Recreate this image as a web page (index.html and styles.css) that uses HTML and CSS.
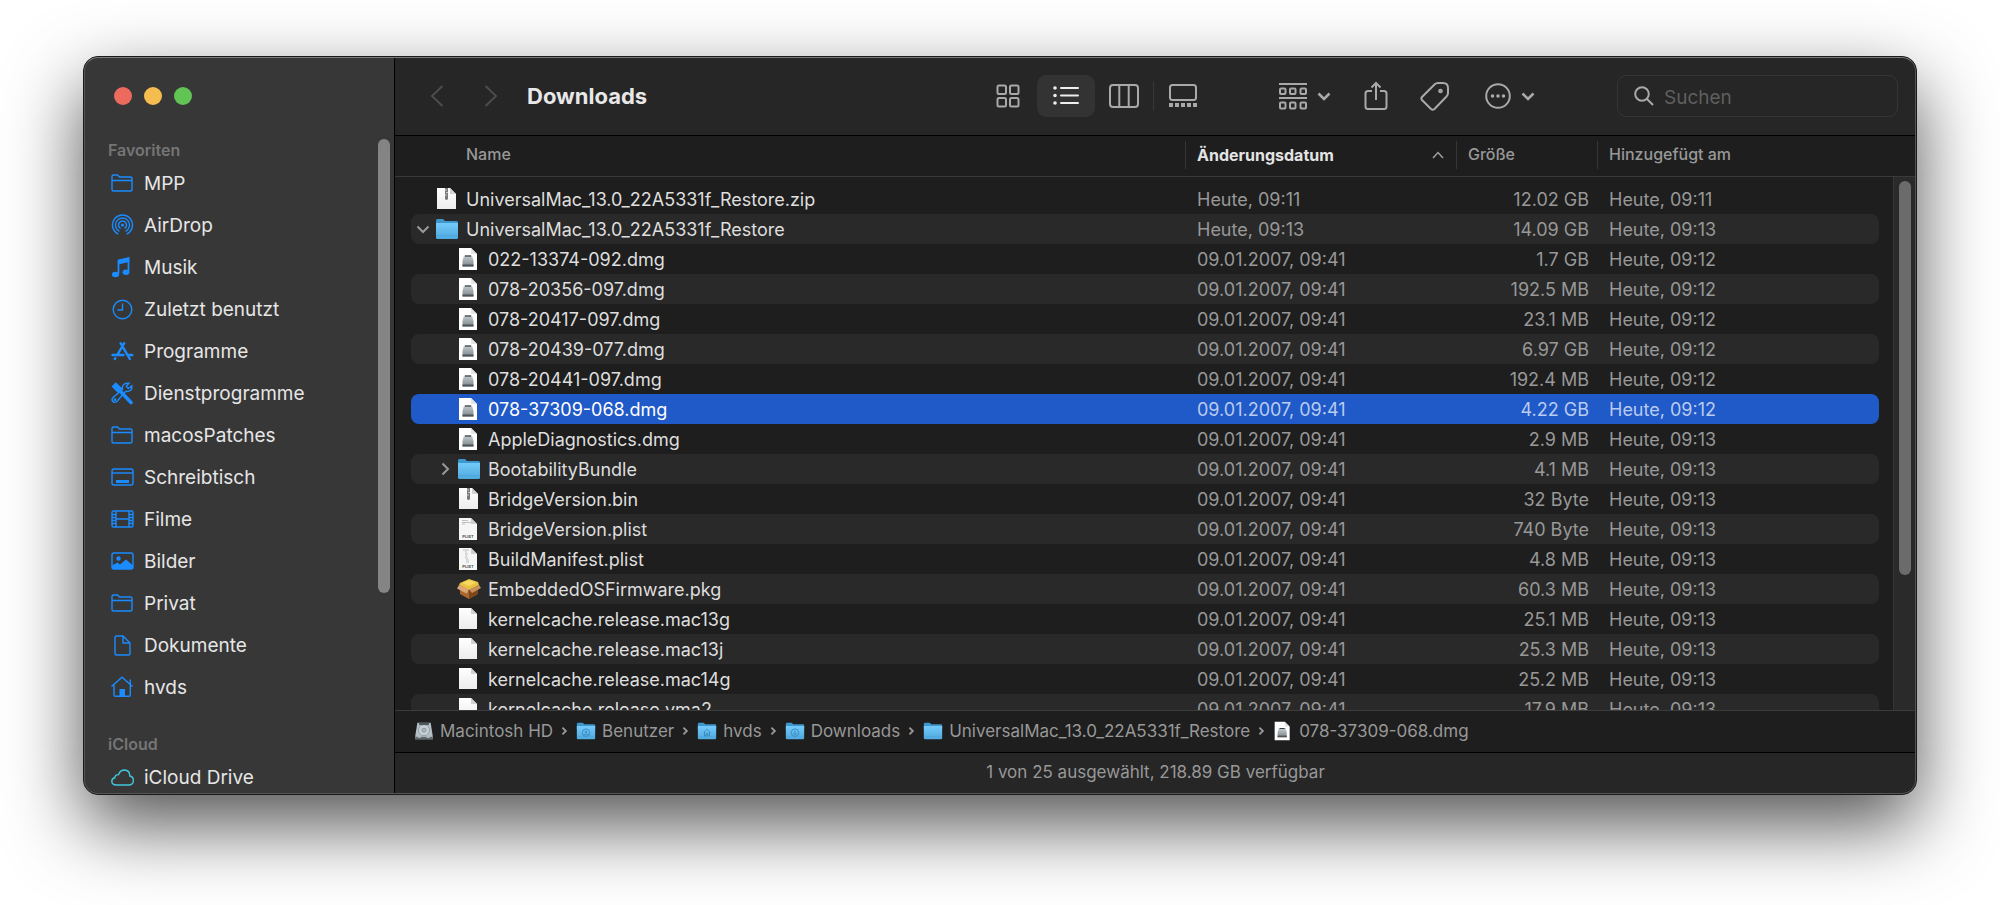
FILE: index.html
```html
<!DOCTYPE html>
<html lang="de">
<head>
    <meta charset="UTF-8">
    <title>Downloads</title>
    <link rel="stylesheet" href="styles.css">
</head>
<body>
<svg class="defs" aria-hidden="true">
    <defs>
        <linearGradient id="blue" x1="0" y1="0" x2="0" y2="1">
            <stop offset="0" stop-color="#74cafa"/>
            <stop offset="1" stop-color="#4ea9de"/>
        </linearGradient>
        <linearGradient id="paper" x1="0" y1="0" x2="0" y2="1">
            <stop offset="0" stop-color="#ffffff"/>
            <stop offset="1" stop-color="#ececec"/>
        </linearGradient>
        <linearGradient id="metal" x1="0" y1="0" x2="0" y2="1">
            <stop offset="0" stop-color="#c4ccd0"/>
            <stop offset="1" stop-color="#7d868a"/>
        </linearGradient>
    </defs>
    <!-- sidebar -->
    <symbol id="s-folder" viewBox="0 0 24 24">
        <path d="M2 18V5.500Q2 4 3.500 4H7.500L9.500 6H20.500Q22 6 22 7.500V18.500Q22 20 20.500 20H3.500Q2 20 2 18.500ZM2 9.500H22"/>
    </symbol>
    <symbol id="s-airdrop" viewBox="0 0 24 24">
        <circle cx="12.500" cy="12" r="1.600" fill="currentColor" stroke="none"/>
        <path d="M10.600 15.500A4 4 0 1 1 14.400 15.500M9.400 18.300A7 7 0 1 1 15.600 18.300M8.200 21A10 10 0 1 1 16.800 21"/>
    </symbol>
    <symbol id="s-music" viewBox="0 0 24 24">
        <path d="M8.500 18.500V5.500L18.500 3.200V16.500" stroke-width="1.800"/>
        <path d="M8 5L19.300 2.500V7L8 9.500Z" fill="currentColor" stroke="none"/>
        <ellipse cx="5.500" cy="19.500" rx="3.600" ry="2.800" fill="currentColor" stroke="none"/>
        <ellipse cx="16" cy="17.300" rx="3.400" ry="2.700" fill="currentColor" stroke="none"/>
    </symbol>
    <symbol id="s-clock" viewBox="0 0 24 24">
        <circle cx="12.500" cy="12.500" r="9.300"/>
        <path d="M12.500 6.500V13H7.500"/>
    </symbol>
    <symbol id="s-apps" viewBox="0 0 24 24">
        <path d="M14.200 4.200L7.300 16M10.600 4.200L19.800 20M5.300 19.200L4.800 20M2.500 16H13.500M17.500 16H22.200" stroke-width="2.400" stroke-linecap="round"/>
    </symbol>
    <symbol id="s-tools" viewBox="0 0 24 24">
        <path d="M2.500 5.500L5.800 2.200L12 8L8.500 11.500Z" fill="currentColor"/>
        <path d="M11 11L21 21.500" stroke-width="3.600" stroke-linecap="round"/>
        <path d="M15.500 10.500L6.800 20.500A2.800 2.800 0 0 1 2.500 17L12.500 8.500Q11.500 3 17 2.300L19 2.300L16.300 5.300L18.300 7.600L21.800 4.800Q22.800 11 15.500 10.500Z"/>
        <circle cx="5" cy="18.700" r=".7"/>
    </symbol>
    <symbol id="s-desktop" viewBox="0 0 24 24">
        <rect x="2" y="4" width="21" height="16" rx="2"/>
        <path d="M2 8H23"/>
        <path d="M6 16.500H19" stroke-width="3"/>
    </symbol>
    <symbol id="s-film" viewBox="0 0 24 24">
        <rect x="2" y="4" width="21" height="16" rx="1.500"/>
        <path d="M6 4V20M19 4V20M6 12H19M2 7.500H6M2 10.500H6M2 13.500H6M2 16.500H6M19 7.500H23M19 10.500H23M19 13.500H23M19 16.500H23"/>
    </symbol>
    <symbol id="s-image" viewBox="0 0 24 24">
        <rect x="2" y="4" width="21" height="16" rx="2"/>
        <circle cx="8.500" cy="9.500" r="2.200" fill="currentColor" stroke="none"/>
        <path d="M2 16.500L7.500 13.500L10 15.500L16 10.500L23 16.500V18.500Q23 20 21 20H4Q2 20 2 18.500Z" fill="currentColor" stroke="none"/>
    </symbol>
    <symbol id="s-doc" viewBox="0 0 24 24">
        <path d="M5 4.500Q5 3 6.500 3H13L20 10V20.500Q20 22 18.500 22H6.500Q5 22 5 20.500ZM13 3V10H20"/>
    </symbol>
    <symbol id="s-home" viewBox="0 0 24 24">
        <path d="M1.500 11.500L12 2.300L22.500 11.500M4 9.500V20Q4 21.300 5.300 21.300H19Q20.300 21.300 20.300 20V4.500"/>
        <path d="M9.500 21V14H15V21Z" fill="currentColor" stroke="none"/>
    </symbol>
    <symbol id="s-cloud" viewBox="0 0 24 24">
        <path d="M6.500 20Q1.800 20 1.800 16.300Q1.800 13.400 4.800 12.800Q5 9.500 8.600 9.600Q10.200 5 14.500 5Q19.800 5.300 19.800 11Q23.400 11.800 23.400 15.500Q23.200 20 18.800 20Z"/>
    </symbol>
    <!-- files -->
    <symbol id="f-zip" viewBox="0 0 24 24">
        <path d="M2 1H15L21 7V22H2Z" fill="url(#paper)"/>
        <path d="M15 1L21 7H15Z" fill="#d2d2d2"/>
        <path d="M10 1H13V12Q11.500 14 10 12Z" fill="#77797b"/>
        <path d="M10 3H12M11 5.500H13M10 8H12" stroke="#c8c8c8"/>
    </symbol>
    <symbol id="f-doc" viewBox="0 0 24 24">
        <path d="M2 1H14L20 7V22H2Z" fill="url(#paper)"/>
        <path d="M14 1L20 7H14Z" fill="#d2d2d2"/>
    </symbol>
    <symbol id="f-dmg" viewBox="0 0 24 24">
        <path d="M2 1H14L20 7V23H2Z" fill="#ffffff"/>
        <path d="M14 1L20 7H14Z" fill="#e4e4e4"/>
        <path d="M7 8.500H15L16.500 14V19.500H5.500V14Z" fill="url(#metal)"/>
        <path d="M8 9H14" stroke="#353b3d" stroke-width="1.200"/>
        <path d="M5.500 18.500H16.500" stroke="#4d5558" stroke-width="2"/>
    </symbol>
    <symbol id="f-plist" viewBox="0 0 24 24">
        <path d="M2 1H14L20 7V23H2Z" fill="#f6f6f6"/>
        <path d="M14 1L20 7H14Z" fill="#cfcfcf"/>
        <path d="M5 3.500H11M5 5.500H14M5 7H8" stroke="#c0c0c0"/>
        <text x="11" y="20.500" text-anchor="middle" class="tag-text">PLIST</text>
    </symbol>
    <symbol id="f-plist2" viewBox="0 0 24 24">
        <path d="M2 1H14L20 7V23H2Z" fill="#f6f6f6"/>
        <path d="M14 1L20 7H14Z" fill="#cfcfcf"/>
        <path d="M6 3H12M8 5H10M8 7H11M8 9H10M8 11H11M9 13H12M9 15H12" stroke="#bdbdbd"/>
        <text x="11" y="20.500" text-anchor="middle" class="tag-text">PLIST</text>
    </symbol>
    <symbol id="f-folder" viewBox="0 0 24 24">
        <path d="M1 3.500Q1 2 2.500 2H8L10 4H21.500Q23 4 23 5.500V10H1Z" fill="#3d97cc"/>
        <path d="M1 6H23V20.500Q23 22 21.500 22H2.500Q1 22 1 20.500Z" fill="url(#blue)"/>
        <path d="M1 18.500H23" stroke="#4499cc" stroke-opacity=".4"/>
    </symbol>
    <symbol id="f-pkg" viewBox="0 0 24 24">
        <path d="M3 10L12 14L21 10V17L12 22L3 17Z" fill="#a8682f"/>
        <path d="M12 13L21 9V17L12 22Z" fill="#7d4519"/>
        <path d="M3 6L12 2L21 5L22 8L12 13L2 8Z" fill="#e9c23f"/>
        <path d="M5 6L12 3L19 5.500L12 9Z" fill="#f5d960"/>
        <path d="M2 8L12 12.500L9.500 16.500L0 11.500Z" fill="#dda676"/>
        <path d="M22 8L12 12.500L15 16L24 11Z" fill="#c98e5c"/>
    </symbol>
    <symbol id="f-disk" viewBox="0 0 24 24">
        <path d="M4 2H20L22.500 18V22H1.500V18Z" fill="#b3bfc6"/>
        <circle cx="12" cy="11" r="6.500" fill="#c8d2d8" stroke="#8b979e"/>
        <circle cx="12" cy="11" r="2.500" fill="#aeb9bf" stroke="#7f8b92"/>
        <path d="M6 3.500H18" stroke="#4d565b" stroke-width="2.500"/>
        <path d="M1.500 20.500H22.500" stroke="#5d676c" stroke-width="3"/>
        <path d="M5 19.500H8M15 19.500H19" stroke="#dce2e5"/>
    </symbol>
    <symbol id="chev-down" viewBox="0 0 16 16"><path d="M2.500 5.500L8 11L13.500 5.500"/></symbol>
    <symbol id="chev-right" viewBox="0 0 16 16"><path d="M5.500 2.500L11 8L5.500 13.500"/></symbol>
</svg>

<main class="window">
    <aside class="sidebar">
        <div class="lights">
            <button class="light red" aria-label="Schließen"></button>
            <button class="light yellow" aria-label="Minimieren"></button>
            <button class="light green" aria-label="Vergrößern"></button>
        </div>
        <nav class="places">
            <h2>Favoriten</h2>
            <ul>
                <li><a href="#"><svg><use href="#s-folder"/></svg>MPP</a></li>
                <li><a href="#"><svg><use href="#s-airdrop"/></svg>AirDrop</a></li>
                <li><a href="#"><svg><use href="#s-music"/></svg>Musik</a></li>
                <li><a href="#"><svg><use href="#s-clock"/></svg>Zuletzt benutzt</a></li>
                <li><a href="#"><svg><use href="#s-apps"/></svg>Programme</a></li>
                <li><a href="#"><svg><use href="#s-tools"/></svg>Dienstprogramme</a></li>
                <li><a href="#"><svg><use href="#s-folder"/></svg>macosPatches</a></li>
                <li><a href="#"><svg><use href="#s-desktop"/></svg>Schreibtisch</a></li>
                <li><a href="#"><svg><use href="#s-film"/></svg>Filme</a></li>
                <li><a href="#"><svg><use href="#s-image"/></svg>Bilder</a></li>
                <li><a href="#"><svg><use href="#s-folder"/></svg>Privat</a></li>
                <li><a href="#"><svg><use href="#s-doc"/></svg>Dokumente</a></li>
                <li><a href="#"><svg><use href="#s-home"/></svg>hvds</a></li>
            </ul>
            <h2>iCloud</h2>
            <ul>
                <li><a href="#" class="cloud"><svg><use href="#s-cloud"/></svg>iCloud Drive</a></li>
            </ul>
        </nav>
        <div class="side-thumb"></div>
    </aside>

    <section class="content">
        <header class="toolbar">
            <div class="history">
                <button aria-label="Zurück"><svg width="14" height="24" viewBox="0 0 14 24"><path d="M12.500 2L2 12L12.500 22"/></svg></button>
                <button aria-label="Vorwärts"><svg width="14" height="24" viewBox="0 0 14 24"><path d="M1.500 2L12 12L1.500 22"/></svg></button>
            </div>
            <h1>Downloads</h1>
            <div class="views">
                <button aria-label="Symbole">
                    <svg width="24" height="24" viewBox="0 0 24 24"><rect x="1.500" y="1.500" width="8.500" height="8.500" rx="1.500"/><rect x="14" y="1.500" width="8.500" height="8.500" rx="1.500"/><rect x="1.500" y="14" width="8.500" height="8.500" rx="1.500"/><rect x="14" y="14" width="8.500" height="8.500" rx="1.500"/></svg>
                </button>
                <button class="on" aria-label="Liste">
                    <svg width="26" height="24" viewBox="0 0 26 24"><path d="M8 4H25M8 11.500H25M8 19H25" stroke-linecap="round"/><path d="M2 4H2.010M2 11.500H2.010M2 19H2.010" stroke-width="3.600" stroke-linecap="round"/></svg>
                </button>
                <button aria-label="Spalten">
                    <svg width="30" height="24" viewBox="0 0 30 24"><rect x="1" y="1" width="28" height="22" rx="3"/><path d="M10.300 1V23M19.700 1V23"/></svg>
                </button>
                <span class="sep"></span>
                <button aria-label="Galerie">
                    <svg width="30" height="24" viewBox="0 0 30 24"><rect x="2" y="1" width="26" height="15" rx="2.500"/><path d="M1 21H29" stroke-width="4" stroke-dasharray="4 2"/></svg>
                </button>
            </div>
            <div class="actions">
                <button class="group" aria-label="Gruppieren">
                    <svg width="28" height="28" viewBox="0 0 28 28"><path d="M0 2H28M0 16H28"/><rect x="1" y="6.500" width="5.500" height="5.500" rx="1"/><rect x="11" y="6.500" width="5.500" height="5.500" rx="1"/><rect x="21.500" y="6.500" width="5.500" height="5.500" rx="1"/><rect x="1" y="20.500" width="5.500" height="6" rx="1"/><rect x="11" y="20.500" width="5.500" height="6" rx="1"/><rect x="21.500" y="20.500" width="5.500" height="6" rx="1"/></svg>
                    <svg class="drop"><use href="#chev-down"/></svg>
                </button>
                <button class="share" aria-label="Teilen">
                    <svg width="24" height="30" viewBox="0 0 24 30"><path d="M8 10H4Q1.500 10 1.500 12.500V25.500Q1.500 28 4 28H20Q22.500 28 22.500 25.500V12.500Q22.500 10 20 10H16M12 19V2M7.500 6.500L12 2L16.500 6.500"/></svg>
                </button>
                <button class="tags" aria-label="Tags">
                    <svg width="30" height="30" viewBox="0 0 30 30"><path d="M14.500 3.500Q16 2 18 2H23Q28 2 28 7V12Q28 14 26.500 15.500L14.500 28Q12.700 29.500 11 28L2 19Q.7 17.500 2 16Z"/><circle cx="20.500" cy="10" r="1.300"/></svg>
                </button>
                <button class="more" aria-label="Mehr">
                    <svg width="26" height="26" viewBox="0 0 26 26"><circle cx="13" cy="13" r="11.800"/><path d="M7.500 13H7.510M13 13H13.010M18.500 13H18.510" stroke-width="3.600" stroke-linecap="round"/></svg>
                    <svg class="drop"><use href="#chev-down"/></svg>
                </button>
            </div>
            <label class="search">
                <svg width="20" height="20" viewBox="0 0 20 20"><circle cx="8" cy="8" r="6.800"/><path d="M13 13L19 19"/></svg>
                <input type="search" placeholder="Suchen" aria-label="Suchen">
            </label>
        </header>

        <div class="list">
            <table>
                <thead>
                <tr>
                    <th class="first">Name</th>
                    <th class="sorted">Änderungsdatum <svg width="14" height="14" viewBox="0 0 14 14"><path d="M2 10L7 4.500L12 10"/></svg></th>
                    <th>Größe</th>
                    <th>Hinzugefügt am</th>
                </tr>
                </thead>
                <tbody>
                <tr><td class="name"><svg class="arrow"></svg><svg class="icon"><use href="#f-zip"/></svg>UniversalMac_13.0_22A5331f_Restore.zip</td><td>Heute, 09:11</td><td class="size">12.02 GB</td><td>Heute, 09:11</td></tr>
                <tr><td class="name"><svg class="arrow"><use href="#chev-down"/></svg><svg class="icon"><use href="#f-folder"/></svg>UniversalMac_13.0_22A5331f_Restore</td><td>Heute, 09:13</td><td class="size">14.09 GB</td><td>Heute, 09:13</td></tr>
                <tr><td class="name child"><svg class="arrow"></svg><svg class="icon"><use href="#f-dmg"/></svg>022-13374-092.dmg</td><td>09.01.2007, 09:41</td><td class="size">1.7 GB</td><td>Heute, 09:12</td></tr>
                <tr><td class="name child"><svg class="arrow"></svg><svg class="icon"><use href="#f-dmg"/></svg>078-20356-097.dmg</td><td>09.01.2007, 09:41</td><td class="size">192.5 MB</td><td>Heute, 09:12</td></tr>
                <tr><td class="name child"><svg class="arrow"></svg><svg class="icon"><use href="#f-dmg"/></svg>078-20417-097.dmg</td><td>09.01.2007, 09:41</td><td class="size">23.1 MB</td><td>Heute, 09:12</td></tr>
                <tr><td class="name child"><svg class="arrow"></svg><svg class="icon"><use href="#f-dmg"/></svg>078-20439-077.dmg</td><td>09.01.2007, 09:41</td><td class="size">6.97 GB</td><td>Heute, 09:12</td></tr>
                <tr><td class="name child"><svg class="arrow"></svg><svg class="icon"><use href="#f-dmg"/></svg>078-20441-097.dmg</td><td>09.01.2007, 09:41</td><td class="size">192.4 MB</td><td>Heute, 09:12</td></tr>
                <tr class="selected"><td class="name child"><svg class="arrow"></svg><svg class="icon"><use href="#f-dmg"/></svg>078-37309-068.dmg</td><td>09.01.2007, 09:41</td><td class="size">4.22 GB</td><td>Heute, 09:12</td></tr>
                <tr><td class="name child"><svg class="arrow"></svg><svg class="icon"><use href="#f-dmg"/></svg>AppleDiagnostics.dmg</td><td>09.01.2007, 09:41</td><td class="size">2.9 MB</td><td>Heute, 09:13</td></tr>
                <tr><td class="name child"><svg class="arrow"><use href="#chev-right"/></svg><svg class="icon"><use href="#f-folder"/></svg>BootabilityBundle</td><td>09.01.2007, 09:41</td><td class="size">4.1 MB</td><td>Heute, 09:13</td></tr>
                <tr><td class="name child"><svg class="arrow"></svg><svg class="icon"><use href="#f-zip"/></svg>BridgeVersion.bin</td><td>09.01.2007, 09:41</td><td class="size">32 Byte</td><td>Heute, 09:13</td></tr>
                <tr><td class="name child"><svg class="arrow"></svg><svg class="icon"><use href="#f-plist"/></svg>BridgeVersion.plist</td><td>09.01.2007, 09:41</td><td class="size">740 Byte</td><td>Heute, 09:13</td></tr>
                <tr><td class="name child"><svg class="arrow"></svg><svg class="icon"><use href="#f-plist2"/></svg>BuildManifest.plist</td><td>09.01.2007, 09:41</td><td class="size">4.8 MB</td><td>Heute, 09:13</td></tr>
                <tr><td class="name child"><svg class="arrow"></svg><svg class="icon"><use href="#f-pkg"/></svg>EmbeddedOSFirmware.pkg</td><td>09.01.2007, 09:41</td><td class="size">60.3 MB</td><td>Heute, 09:13</td></tr>
                <tr><td class="name child"><svg class="arrow"></svg><svg class="icon"><use href="#f-doc"/></svg>kernelcache.release.mac13g</td><td>09.01.2007, 09:41</td><td class="size">25.1 MB</td><td>Heute, 09:13</td></tr>
                <tr><td class="name child"><svg class="arrow"></svg><svg class="icon"><use href="#f-doc"/></svg>kernelcache.release.mac13j</td><td>09.01.2007, 09:41</td><td class="size">25.3 MB</td><td>Heute, 09:13</td></tr>
                <tr><td class="name child"><svg class="arrow"></svg><svg class="icon"><use href="#f-doc"/></svg>kernelcache.release.mac14g</td><td>09.01.2007, 09:41</td><td class="size">25.2 MB</td><td>Heute, 09:13</td></tr>
                <tr><td class="name child"><svg class="arrow"></svg><svg class="icon"><use href="#f-doc"/></svg>kernelcache.release.vma2</td><td>09.01.2007, 09:41</td><td class="size">17.9 MB</td><td>Heute, 09:13</td></tr>
                </tbody>
            </table>
            <div class="track"><div class="thumb"></div></div>
        </div>

        <nav class="path">
            <a href="#"><svg><use href="#f-disk"/></svg>Macintosh HD</a>
            <svg class="next"><use href="#chev-right"/></svg>
            <a href="#"><svg viewBox="0 0 24 24"><use href="#f-folder"/><circle class="mark" cx="12" cy="14" r="4.500"/><circle class="mark" cx="12" cy="13" r="1"/><path class="mark" d="M9 17Q12 14 15 17"/></svg>Benutzer</a>
            <svg class="next"><use href="#chev-right"/></svg>
            <a href="#"><svg viewBox="0 0 24 24"><use href="#f-folder"/><path class="mark" d="M8 14L12 10L16 14M9 13V18H11V15H13V18H15V13"/></svg>hvds</a>
            <svg class="next"><use href="#chev-right"/></svg>
            <a href="#"><svg viewBox="0 0 24 24"><use href="#f-folder"/><circle class="mark" cx="12" cy="14" r="4.500"/><path class="mark" d="M12 11.500V16M10 14.500L12 16.500L14 14.500"/></svg>Downloads</a>
            <svg class="next"><use href="#chev-right"/></svg>
            <a href="#"><svg><use href="#f-folder"/></svg>UniversalMac_13.0_22A5331f_Restore</a>
            <svg class="next"><use href="#chev-right"/></svg>
            <a href="#"><svg><use href="#f-dmg"/></svg>078-37309-068.dmg</a>
        </nav>
        <footer class="status">1 von 25 ausgewählt, 218.89 GB verfügbar</footer>
    </section>
</main>
</body>
</html>
```

FILE: styles.css
```css
*{
    margin: 0;
    padding: 0;
    box-sizing: border-box;
}
body{
    display: flex;
    height: 100vh;
    padding: 56px 83px 110px;
    background: #ffffff;
    font-family: Inter, "Liberation Sans", sans-serif;
    overflow: hidden;
}
.defs{
    position: absolute;
    width: 0;
    height: 0;
}
svg{
    flex: none;
    fill: none;
    stroke: none;
}
button{
    border: 0;
    background: none;
    font: inherit;
    color: inherit;
}
a{
    color: inherit;
    text-decoration: none;
}
ul{
    list-style: none;
}

/* window */
.window{
    position: relative;
    display: flex;
    flex: 1;
    min-width: 0;
    border: 1px solid #1a1a1a;
    border-radius: 15px;
    background: #1e1e1e;
    overflow: hidden;
    box-shadow: 0 30px 75px rgba(0,0,0,.68);
}
.window::after{
    content: "";
    position: absolute;
    inset: 0;
    border: 1px solid #555555;
    border-top-color: #7a7a7a;
    border-radius: 14px;
    pointer-events: none;
}

/* sidebar */
.sidebar{
    position: relative;
    flex: none;
    width: 311px;
    border-right: 1px solid #000000;
    background: #373737;
    overflow: hidden;
}
.lights{
    display: flex;
    gap: 12px;
    padding: 30px 30px 33px;
}
.light{
    width: 18px;
    height: 18px;
    border-radius: 50%;
}
.red{
    background: #ed6a5e;
}
.yellow{
    background: #f5bd4f;
}
.green{
    background: #61c454;
}
.places h2{
    padding-left: 24px;
    font-size: 16px;
    font-weight: 600;
    line-height: 24px;
    color: #757575;
}
.places ul{
    margin-bottom: 24px;
}
.places a{
    display: flex;
    align-items: center;
    gap: 10px;
    height: 42px;
    padding-left: 26px;
    font-size: 19px;
    color: #e6e6e6;
}
.places svg{
    width: 24px;
    height: 24px;
    color: #1a8cff;
    stroke: currentColor;
    stroke-width: 1.4;
}
.places .cloud svg{
    color: #3fc8dc;
}
.side-thumb{
    position: absolute;
    top: 82px;
    right: 4px;
    width: 12px;
    height: 454px;
    border-radius: 6px;
    background: #848484;
}

/* toolbar */
.content{
    display: flex;
    flex: 1;
    flex-direction: column;
    min-width: 0;
}
.toolbar{
    display: flex;
    flex: none;
    align-items: center;
    height: 79px;
    padding: 0 18px 0 35px;
    border-bottom: 1px solid #000000;
    background: #262626;
    color: #a9a9a9;
}
.toolbar svg{
    stroke: currentColor;
    stroke-width: 2;
}
.toolbar button{
    display: flex;
    align-items: center;
}
.history{
    display: flex;
    gap: 40px;
    color: #4c4c4c;
}
.toolbar h1{
    margin-left: 29px;
    font-size: 22px;
    font-weight: 700;
    color: #e8e8e8;
}
.views{
    display: flex;
    align-items: center;
    gap: 3px;
    margin-left: auto;
}
.views button{
    justify-content: center;
    width: 52px;
    height: 42px;
    border-radius: 9px;
}
.views .on{
    width: 58px;
    background: #333333;
    color: #eeeeee;
}
.sep{
    width: 1px;
    height: 30px;
    background: #383838;
}
.actions{
    display: flex;
    align-items: center;
    margin-left: 70px;
}
.group,
.more{
    gap: 9px;
}
.share,
.tags{
    margin-left: 32px;
}
.more{
    margin-left: 35px;
}
.toolbar .drop{
    width: 16px;
    height: 16px;
    stroke-width: 2.6;
}
.search{
    display: flex;
    flex: none;
    align-items: center;
    gap: 10px;
    width: 281px;
    height: 42px;
    margin-left: 81px;
    padding: 0 16px;
    border: 1px solid #363636;
    border-radius: 9px;
}
.search input{
    width: 100%;
    min-width: 0;
    padding-top: 2px;
    border: 0;
    outline: 0;
    background: none;
    font: 19px Inter, "Liberation Sans", sans-serif;
    color: #e6e6e6;
}
.search input::placeholder{
    color: #5f5f5f;
}

/* file list */
.list{
    position: relative;
    display: flex;
    flex: 1;
    min-height: 0;
}
table{
    display: flex;
    flex: 1;
    flex-direction: column;
    min-width: 0;
    font-size: 18px;
    color: #989898;
}
tr{
    display: grid;
    grid-template-columns: 1fr 271px 141px 282px;
    align-items: center;
}
thead{
    display: block;
    padding: 0 37px 0 16px;
    border-bottom: 1px solid #3a3a3a;
    font-size: 16px;
}
thead tr{
    height: 40px;
    padding-bottom: 2px;
}
th{
    height: 28px;
    padding-left: 11px;
    border-left: 1px solid #363636;
    font-weight: 500;
    line-height: 27px;
    text-align: left;
}
th.first{
    padding-left: 55px;
    border-left: 0;
}
th.sorted{
    display: flex;
    align-items: center;
    justify-content: space-between;
    padding-right: 11px;
    font-weight: 700;
    color: #e4e4e4;
}
th svg{
    stroke: #a0a0a0;
    stroke-width: 1.5;
}
tbody{
    display: block;
    flex: 1;
    min-height: 0;
    padding: 7px 37px 0 16px;
    overflow: hidden;
}
tbody tr{
    height: 30px;
    border-radius: 8px;
}
tbody tr:nth-child(even){
    background: #292929;
}
td{
    padding-left: 12px;
    white-space: nowrap;
}
td.name{
    display: flex;
    align-items: center;
    padding-left: 4px;
    color: #dedede;
}
td.child{
    padding-left: 26px;
}
td.size{
    padding-right: 8px;
    text-align: right;
}
.arrow{
    width: 16px;
    height: 16px;
    margin-right: 4px;
    stroke: #9a9a9a;
    stroke-width: 2;
}
.icon{
    width: 24px;
    height: 24px;
    margin-right: 7px;
}
.tag-text{
    font: 700 4px Inter, sans-serif;
    fill: #555555;
}
tbody tr.selected{
    background: #2059c8;
    color: #b9ccf0;
}
.selected td.name{
    color: #ffffff;
}
.track{
    position: absolute;
    top: 41px;
    right: 0;
    bottom: 0;
    width: 23px;
    padding: 4px 5px;
    border-left: 1px solid #363636;
    background: #2a2a2a;
}
.thumb{
    width: 12px;
    height: 75%;
    border-radius: 6px;
    background: #6b6b6b;
}

/* path and status */
.path{
    display: flex;
    flex: none;
    align-items: center;
    height: 42px;
    padding: 0 19px 1px;
    border-top: 1px solid #3c3c3c;
    font-size: 17px;
    color: #989898;
    white-space: nowrap;
}
.path a{
    display: flex;
    align-items: center;
    gap: 6px;
}
.path a svg{
    width: 20px;
    height: 20px;
}
.path .next{
    width: 10px;
    height: 10px;
    margin: 0 7px 0 6px;
    stroke: #989898;
    stroke-width: 3;
}
.path .mark{
    stroke: #3385bb;
}
.status{
    flex: none;
    height: 42px;
    border-top: 1px solid #000000;
    background: #262626;
    font-size: 17px;
    line-height: 38px;
    text-align: center;
    color: #989898;
}
```
